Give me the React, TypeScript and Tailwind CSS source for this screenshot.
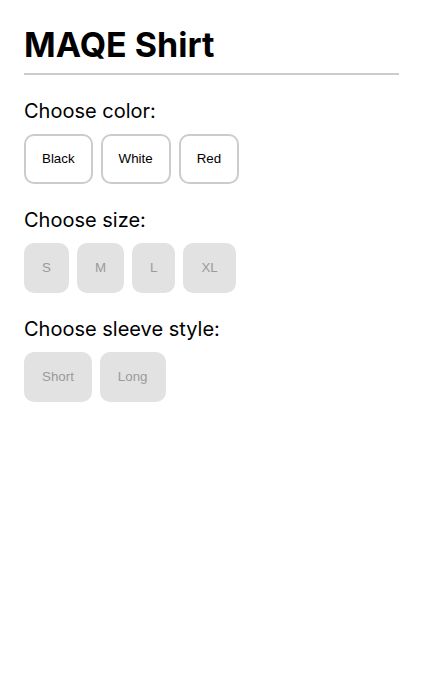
const colors = ['Black', 'White', 'Red']
const sizes = ['S', 'M', 'L', 'XL']
const sleeves = ['Short', 'Long']

function Option({ label, disabled }: { label: string; disabled?: boolean }) {
  return (
    <button
      className={
        disabled
          ? 'h-[50px] px-4 rounded-[10px] border-2 border-[#e2e2e2] bg-[#e2e2e2] text-[#9a9a9a] text-[13.333px] font-["Liberation_Sans",Arial,sans-serif]'
          : 'h-[50px] px-4 rounded-[10px] border-2 border-[#cccccc] bg-white text-black text-[13.333px] font-["Liberation_Sans",Arial,sans-serif]'
      }
    >
      {label}
    </button>
  )
}

function Group({ title, items, disabled }: { title: string; items: string[]; disabled?: boolean }) {
  return (
    <div className="mt-[22px]">
      <div className="text-[20px] leading-7 text-black">{title}</div>
      <div className="flex gap-2 mt-[9px]">
        {items.map((it) => (
          <Option key={it} label={it} disabled={disabled} />
        ))}
      </div>
    </div>
  )
}

export default function App() {
  return (
    <div className="min-h-[674px] bg-white px-6 pt-[23px] font-['Inter',sans-serif]">
      <div className="w-[375px]">
        <h1 className="text-[34px] leading-[44px] font-bold text-black pb-[6px] border-b-2 border-[#cccccc]">
          MAQE Shirt
        </h1>
        <Group title="Choose color:" items={colors} />
        <Group title="Choose size:" items={sizes} disabled />
        <Group title="Choose sleeve style:" items={sleeves} disabled />
      </div>
    </div>
  )
}
